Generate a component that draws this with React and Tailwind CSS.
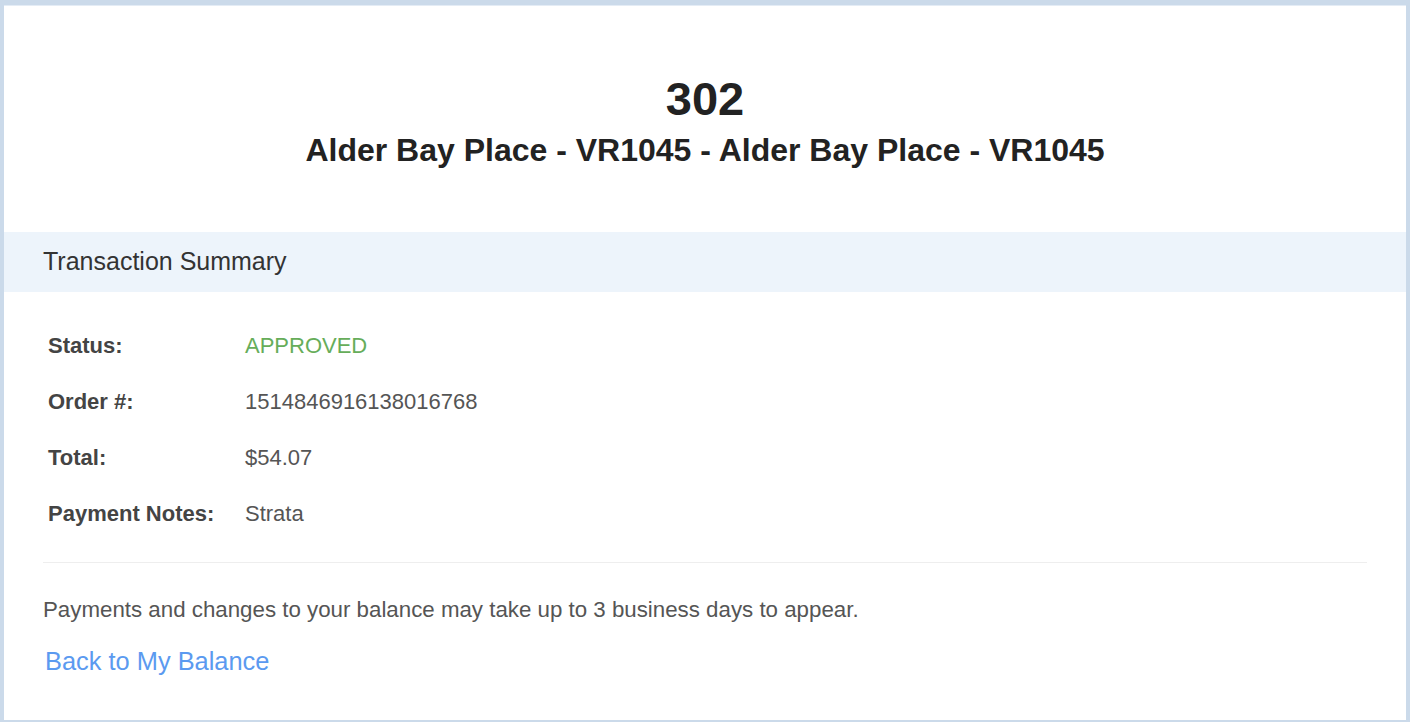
import React from 'react';

const rows = [
  { label: 'Status:', value: 'APPROVED', valueClass: 'text-[#66ad5a]' },
  { label: 'Order #:', value: '1514846916138016768' },
  { label: 'Total:', value: '$54.07' },
  { label: 'Payment Notes:', value: 'Strata' }
];

export default function App() {
  return (
    <div className="min-h-[722px] bg-[#cbdaea] pt-[5px] pl-[4px] pr-[4px] pb-[2px] font-['Liberation_Sans',Arial,sans-serif]">
      <div className="bg-white min-h-[715px] border-t border-[#e4ecf5]">
        {/* Header */}
        <div className="h-[226px] pt-[66px] text-center text-[#222]">
          <h1 className="text-[47px] leading-[54px] font-bold">302</h1>
          <h2 className="text-[32px] leading-[38px] font-bold mt-[5px]">
            Alder Bay Place - VR1045 - Alder Bay Place - VR1045
          </h2>
        </div>

        {/* Transaction summary band */}
        <div className="bg-[#edf4fb] h-[60px] flex items-center px-[39px]">
          <span className="text-[25px] text-[#333]">Transaction Summary</span>
        </div>

        <div className="px-[39px] pt-[25px]">
          <table className="border-collapse">
            <tbody>
              {rows.map(row => (
                <tr key={row.label} className="h-[56px]">
                  <td className="w-[202px] pl-[5px] text-[22px] font-bold text-[#444]">{row.label}</td>
                  <td className={`text-[22px] ${row.valueClass || 'text-[#555]'}`}>{row.value}</td>
                </tr>
              ))}
            </tbody>
          </table>

          <div className="mt-[21px] border-t border-[#eeeeee]" />

          <p className="mt-[32px] text-[22.3px] leading-[30px] text-[#555]">
            Payments and changes to your balance may take up to 3 business days to appear.
          </p>
          <a href="#" className="inline-block mt-[19px] ml-[2px] text-[25.4px] leading-[34px] text-[#5b9af0]">
            Back to My Balance
          </a>
        </div>
      </div>
    </div>
  );
}
